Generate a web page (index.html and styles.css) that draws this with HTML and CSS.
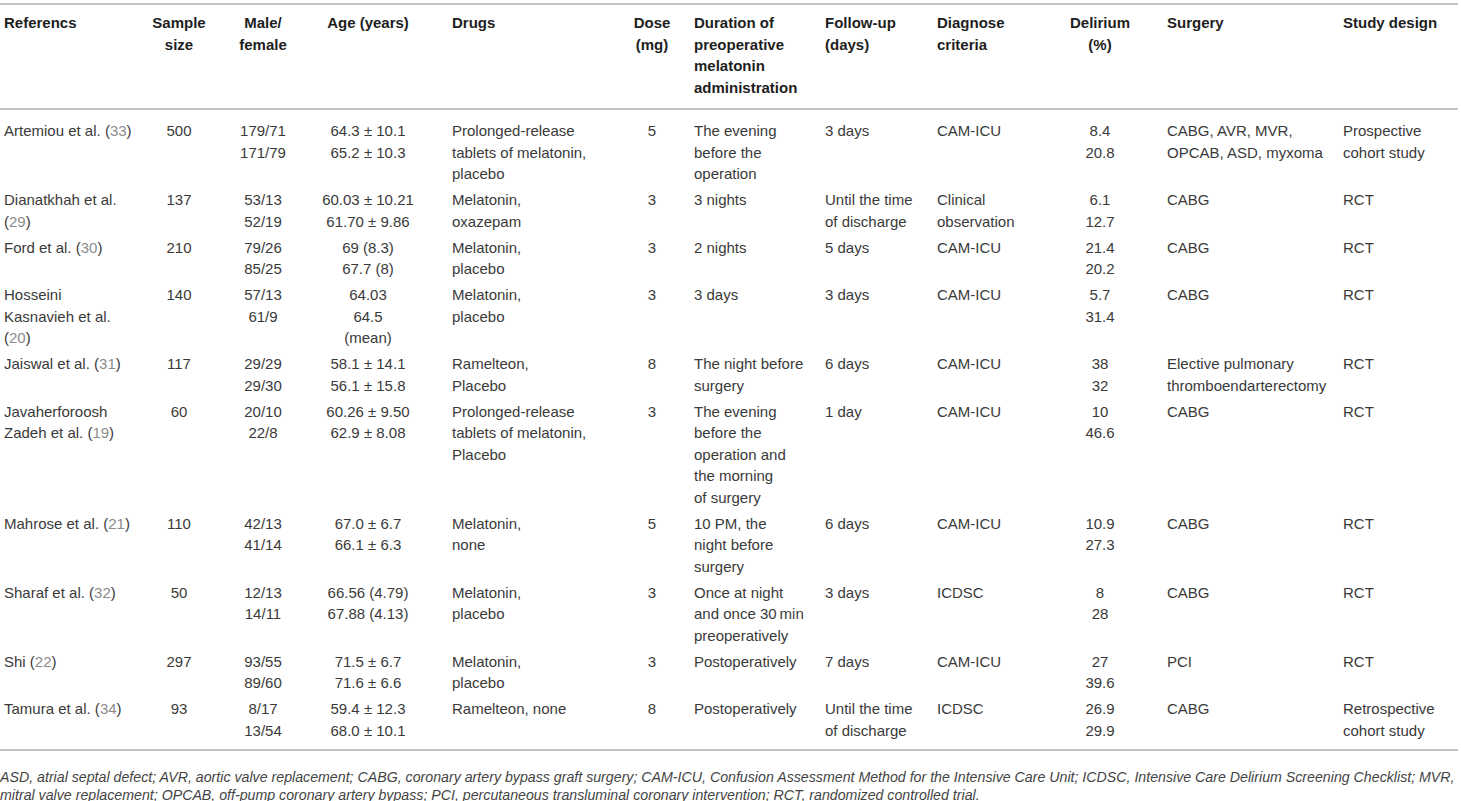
FILE: index.html
```html
<!DOCTYPE html>
<html lang="en">
<head>
    <meta charset="UTF-8">
    <meta name="viewport" content="width=device-width, initial-scale=1.0">
    <title>Melatonin and postoperative delirium - Table</title>
    <link rel="stylesheet" href="styles.css">
</head>
<body>
    <div class="table-wrap">
        <table class="data-table">
            <colgroup>
                <col class="c-ref">
                <col class="c-size">
                <col class="c-sex">
                <col class="c-age">
                <col class="c-drugs">
                <col class="c-dose">
                <col class="c-duration">
                <col class="c-follow">
                <col class="c-diag">
                <col class="c-delirium">
                <col class="c-surgery">
                <col class="c-design">
            </colgroup>
            <thead>
                <tr>
                    <th class="first">Referencs</th>
                    <th class="center">Sample<br>size</th>
                    <th class="center">Male/<br>female</th>
                    <th class="center">Age (years)</th>
                    <th>Drugs</th>
                    <th class="center">Dose<br>(mg)</th>
                    <th>Duration of<br>preoperative<br>melatonin<br>administration</th>
                    <th>Follow-up<br>(days)</th>
                    <th>Diagnose<br>criteria</th>
                    <th class="center">Delirium<br>(%)</th>
                    <th>Surgery</th>
                    <th>Study design</th>
                </tr>
            </thead>
            <tbody>
                <tr>
                    <td class="first">Artemiou et al. (<span class="cite">33</span>)</td>
                    <td class="center">500</td>
                    <td class="center">179/71<br>171/79</td>
                    <td class="center">64.3 ± 10.1<br>65.2 ± 10.3</td>
                    <td>Prolonged-release<br>tablets of melatonin,<br>placebo</td>
                    <td class="center">5</td>
                    <td>The evening<br>before the<br>operation</td>
                    <td>3 days</td>
                    <td>CAM-ICU</td>
                    <td class="center">8.4<br>20.8</td>
                    <td>CABG, AVR, MVR,<br>OPCAB, ASD, myxoma</td>
                    <td>Prospective<br>cohort study</td>
                </tr>
                <tr>
                    <td class="first">Dianatkhah et al.<br>(<span class="cite">29</span>)</td>
                    <td class="center">137</td>
                    <td class="center">53/13<br>52/19</td>
                    <td class="center">60.03 ± 10.21<br>61.70 ± 9.86</td>
                    <td>Melatonin,<br>oxazepam</td>
                    <td class="center">3</td>
                    <td>3 nights</td>
                    <td>Until the time<br>of discharge</td>
                    <td>Clinical<br>observation</td>
                    <td class="center">6.1<br>12.7</td>
                    <td>CABG</td>
                    <td>RCT</td>
                </tr>
                <tr>
                    <td class="first">Ford et al. (<span class="cite">30</span>)</td>
                    <td class="center">210</td>
                    <td class="center">79/26<br>85/25</td>
                    <td class="center">69 (8.3)<br>67.7 (8)</td>
                    <td>Melatonin,<br>placebo</td>
                    <td class="center">3</td>
                    <td>2 nights</td>
                    <td>5 days</td>
                    <td>CAM-ICU</td>
                    <td class="center">21.4<br>20.2</td>
                    <td>CABG</td>
                    <td>RCT</td>
                </tr>
                <tr>
                    <td class="first">Hosseini<br>Kasnavieh et al.<br>(<span class="cite">20</span>)</td>
                    <td class="center">140</td>
                    <td class="center">57/13<br>61/9</td>
                    <td class="center">64.03<br>64.5<br>(mean)</td>
                    <td>Melatonin,<br>placebo</td>
                    <td class="center">3</td>
                    <td>3 days</td>
                    <td>3 days</td>
                    <td>CAM-ICU</td>
                    <td class="center">5.7<br>31.4</td>
                    <td>CABG</td>
                    <td>RCT</td>
                </tr>
                <tr>
                    <td class="first">Jaiswal et al. (<span class="cite">31</span>)</td>
                    <td class="center">117</td>
                    <td class="center">29/29<br>29/30</td>
                    <td class="center">58.1 ± 14.1<br>56.1 ± 15.8</td>
                    <td>Ramelteon,<br>Placebo</td>
                    <td class="center">8</td>
                    <td>The night before<br>surgery</td>
                    <td>6 days</td>
                    <td>CAM-ICU</td>
                    <td class="center">38<br>32</td>
                    <td>Elective pulmonary<br>thromboendarterectomy</td>
                    <td>RCT</td>
                </tr>
                <tr>
                    <td class="first">Javaherforoosh<br>Zadeh et al. (<span class="cite">19</span>)</td>
                    <td class="center">60</td>
                    <td class="center">20/10<br>22/8</td>
                    <td class="center">60.26 ± 9.50<br>62.9 ± 8.08</td>
                    <td>Prolonged-release<br>tablets of melatonin,<br>Placebo</td>
                    <td class="center">3</td>
                    <td>The evening<br>before the<br>operation and<br>the morning<br>of surgery</td>
                    <td>1 day</td>
                    <td>CAM-ICU</td>
                    <td class="center">10<br>46.6</td>
                    <td>CABG</td>
                    <td>RCT</td>
                </tr>
                <tr>
                    <td class="first">Mahrose et al. (<span class="cite">21</span>)</td>
                    <td class="center">110</td>
                    <td class="center">42/13<br>41/14</td>
                    <td class="center">67.0 ± 6.7<br>66.1 ± 6.3</td>
                    <td>Melatonin,<br>none</td>
                    <td class="center">5</td>
                    <td>10 PM, the<br>night before<br>surgery</td>
                    <td>6 days</td>
                    <td>CAM-ICU</td>
                    <td class="center">10.9<br>27.3</td>
                    <td>CABG</td>
                    <td>RCT</td>
                </tr>
                <tr>
                    <td class="first">Sharaf et al. (<span class="cite">32</span>)</td>
                    <td class="center">50</td>
                    <td class="center">12/13<br>14/11</td>
                    <td class="center">66.56 (4.79)<br>67.88 (4.13)</td>
                    <td>Melatonin,<br>placebo</td>
                    <td class="center">3</td>
                    <td>Once at night<br>and once 30&thinsp;min<br>preoperatively</td>
                    <td>3 days</td>
                    <td>ICDSC</td>
                    <td class="center">8<br>28</td>
                    <td>CABG</td>
                    <td>RCT</td>
                </tr>
                <tr>
                    <td class="first">Shi (<span class="cite">22</span>)</td>
                    <td class="center">297</td>
                    <td class="center">93/55<br>89/60</td>
                    <td class="center">71.5 ± 6.7<br>71.6 ± 6.6</td>
                    <td>Melatonin,<br>placebo</td>
                    <td class="center">3</td>
                    <td>Postoperatively</td>
                    <td>7 days</td>
                    <td>CAM-ICU</td>
                    <td class="center">27<br>39.6</td>
                    <td>PCI</td>
                    <td>RCT</td>
                </tr>
                <tr>
                    <td class="first">Tamura et al. (<span class="cite">34</span>)</td>
                    <td class="center">93</td>
                    <td class="center">8/17<br>13/54</td>
                    <td class="center">59.4 ± 12.3<br>68.0 ± 10.1</td>
                    <td>Ramelteon, none</td>
                    <td class="center">8</td>
                    <td>Postoperatively</td>
                    <td>Until the time<br>of discharge</td>
                    <td>ICDSC</td>
                    <td class="center">26.9<br>29.9</td>
                    <td>CABG</td>
                    <td>Retrospective<br>cohort study</td>
                </tr>
            </tbody>
        </table>

        <p class="table-note">ASD, atrial septal defect; AVR, aortic valve replacement; CABG, coronary artery bypass graft surgery; CAM-ICU, Confusion Assessment Method for the Intensive Care Unit; ICDSC, Intensive Care Delirium Screening Checklist; MVR,<br>mitral valve replacement; OPCAB, off-pump coronary artery bypass; PCI, percutaneous transluminal coronary intervention; RCT, randomized controlled trial.</p>
    </div>
</body>
</html>
```

FILE: styles.css
```css
* {
    margin: 0;
    padding: 0;
    box-sizing: border-box;
}

body {
    background-color: #fff;
    font-family: 'Liberation Sans', Arial, Helvetica, sans-serif;
    color: #3a3a3a;
}

.table-wrap {
    width: 1458px;
    padding-top: 3px;
}

.data-table {
    width: 1458px;
    table-layout: fixed;
    border-collapse: separate;
    border-spacing: 0;
    font-size: 15px;
    line-height: 21.4px;
}

/* column widths */
.c-ref { width: 136px; }
.c-size { width: 86px; }
.c-sex { width: 82px; }
.c-age { width: 128px; }
.c-drugs { width: 198px; }
.c-dose { width: 44px; }
.c-duration { width: 131px; }
.c-follow { width: 112px; }
.c-diag { width: 136px; }
.c-delirium { width: 94px; }
.c-surgery { width: 176px; }
.c-design { width: 135px; }

.data-table th,
.data-table td {
    text-align: left;
    vertical-align: top;
    white-space: nowrap;
    padding: 2.4px 0 2.4px 20px;
}

.data-table th {
    color: #1e1e1e;
    font-weight: bold;
    padding-top: 7.4px;
    padding-bottom: 9.7px;
    border-top: 2px solid #c3c3c3;
    border-bottom: 2px solid #c3c3c3;
}

.data-table .first {
    padding-left: 4px;
}

.data-table .center {
    text-align: center;
    padding-left: 0;
}

.data-table tbody tr:first-child td {
    padding-top: 10.4px;
}

.data-table tbody tr:last-child td {
    padding-bottom: 8px;
    border-bottom: 2px solid #c3c3c3;
}

.cite {
    color: #8c8c8c;
}

.table-note {
    font-size: 14.2px;
    line-height: 18px;
    font-style: italic;
    color: #444;
    padding-top: 17px;
    white-space: nowrap;
}
```
